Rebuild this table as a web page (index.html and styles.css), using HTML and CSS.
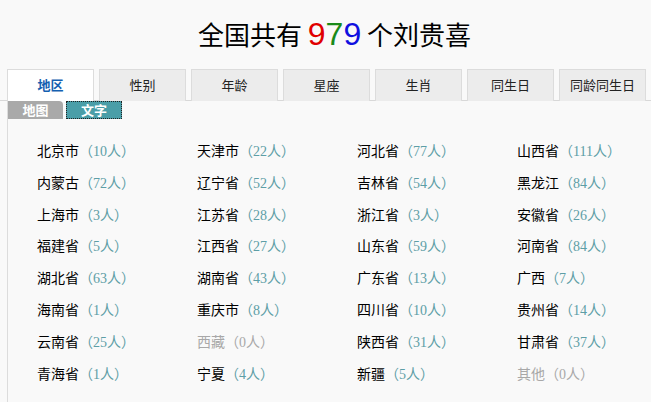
FILE: index.html
```html
<!DOCTYPE html>
<html lang="zh">
<head>
<meta charset="utf-8">
<title>全国共有979个刘贵喜</title>
<link rel="stylesheet" href="styles.css">
</head>
<body>
<h1 class="title">全国共有 <span class="n9">9</span><span class="n7">7</span><span class="n9b">9</span> 个刘贵喜</h1>
<div class="tabs">
  <div class="tab active">地区</div>
  <div class="tab">性别</div>
  <div class="tab">年龄</div>
  <div class="tab">星座</div>
  <div class="tab">生肖</div>
  <div class="tab">同生日</div>
  <div class="tab">同龄同生日</div>
</div>
<div class="panel">
  <div class="subtabs">
    <div class="sub sub-map">地图</div>
    <div class="sub sub-text">文字</div>
  </div>
  <div class="grid">
    <div class="item">北京市<span class="cnt">（10人）</span></div>
    <div class="item">天津市<span class="cnt">（22人）</span></div>
    <div class="item">河北省<span class="cnt">（77人）</span></div>
    <div class="item">山西省<span class="cnt">（111人）</span></div>
    <div class="item">内蒙古<span class="cnt">（72人）</span></div>
    <div class="item">辽宁省<span class="cnt">（52人）</span></div>
    <div class="item">吉林省<span class="cnt">（54人）</span></div>
    <div class="item">黑龙江<span class="cnt">（84人）</span></div>
    <div class="item">上海市<span class="cnt">（3人）</span></div>
    <div class="item">江苏省<span class="cnt">（28人）</span></div>
    <div class="item">浙江省<span class="cnt">（3人）</span></div>
    <div class="item">安徽省<span class="cnt">（26人）</span></div>
    <div class="item">福建省<span class="cnt">（5人）</span></div>
    <div class="item">江西省<span class="cnt">（27人）</span></div>
    <div class="item">山东省<span class="cnt">（59人）</span></div>
    <div class="item">河南省<span class="cnt">（84人）</span></div>
    <div class="item">湖北省<span class="cnt">（63人）</span></div>
    <div class="item">湖南省<span class="cnt">（43人）</span></div>
    <div class="item">广东省<span class="cnt">（13人）</span></div>
    <div class="item">广西<span class="cnt">（7人）</span></div>
    <div class="item">海南省<span class="cnt">（1人）</span></div>
    <div class="item">重庆市<span class="cnt">（8人）</span></div>
    <div class="item">四川省<span class="cnt">（10人）</span></div>
    <div class="item">贵州省<span class="cnt">（14人）</span></div>
    <div class="item">云南省<span class="cnt">（25人）</span></div>
    <div class="item zero">西藏<span class="cnt">（0人）</span></div>
    <div class="item">陕西省<span class="cnt">（31人）</span></div>
    <div class="item">甘肃省<span class="cnt">（37人）</span></div>
    <div class="item">青海省<span class="cnt">（1人）</span></div>
    <div class="item">宁夏<span class="cnt">（4人）</span></div>
    <div class="item">新疆<span class="cnt">（5人）</span></div>
    <div class="item zero">其他<span class="cnt">（0人）</span></div>
  </div>
</div>
</body>
</html>
```

FILE: styles.css
```css
html, body {
  margin: 0;
  padding: 0;
  background: #f9f9f9;
  font-family: "Noto Sans CJK SC", "Noto Sans", sans-serif;
  color: #000;
}

.title {
  margin: 0;
  padding-top: 14px;
  padding-left: 18px;
  height: 55px;
  box-sizing: border-box;
  text-align: center;
  font-size: 26px;
  line-height: 40px;
  font-weight: normal;
  font-family: "Noto Sans CJK SC", sans-serif;
  white-space: nowrap;
}

.title .n9,
.title .n7,
.title .n9b {
  font-family: "Liberation Sans", Arial, sans-serif;
  font-size: 32px;
}
.title .n9 { color: #e00000; }
.title .n7 { color: #1a8a1a; }
.title .n9b { color: #1010e0; }

.tabs {
  display: flex;
  gap: 5px;
  margin-top: 14px;
  padding-left: 7px;
  border-bottom: 1px solid #d8d8d8;
  height: 31px;
}

.tab {
  width: 85px;
  height: 31px;
  box-sizing: content-box;
  border: 1px solid #dcdcdc;
  border-bottom: none;
  background: #ececec;
  text-align: center;
  font-size: 13px;
  line-height: 30px;
  color: #222;
}

.tab.active {
  background: #fff;
  height: 32px;
  color: #1560b0;
  font-weight: bold;
}

.panel {
  margin-left: 7px;
  border-left: 1px solid #dcdcdc;
  height: 301px;
}

.subtabs {
  display: flex;
  gap: 3px;
  height: 18px;
}

.sub {
  height: 18px;
  line-height: 18px;
  text-align: center;
  color: #fff;
  font-size: 13px;
  font-weight: bold;
}

.sub-map {
  width: 55px;
  background: #a9a9a9;
  border-top-right-radius: 4px;
}

.sub-text {
  width: 56px;
  background: #4a9ea8;
  outline: 1px dotted #222;
  outline-offset: -1px;
}

.grid {
  display: grid;
  grid-template-columns: repeat(4, 160px);
  grid-auto-rows: 31.8px;
  padding-left: 29px;
  padding-top: 21px;
}

.item {
  font-size: 14px;
  line-height: 20px;
  white-space: nowrap;
  color: #000;
}

.cnt {
  color: #5d9ea6;
  font-family: "Liberation Serif", "Noto Sans CJK SC", serif;
}

.item.zero,
.item.zero .cnt {
  color: #a8a8a8;
}
```
